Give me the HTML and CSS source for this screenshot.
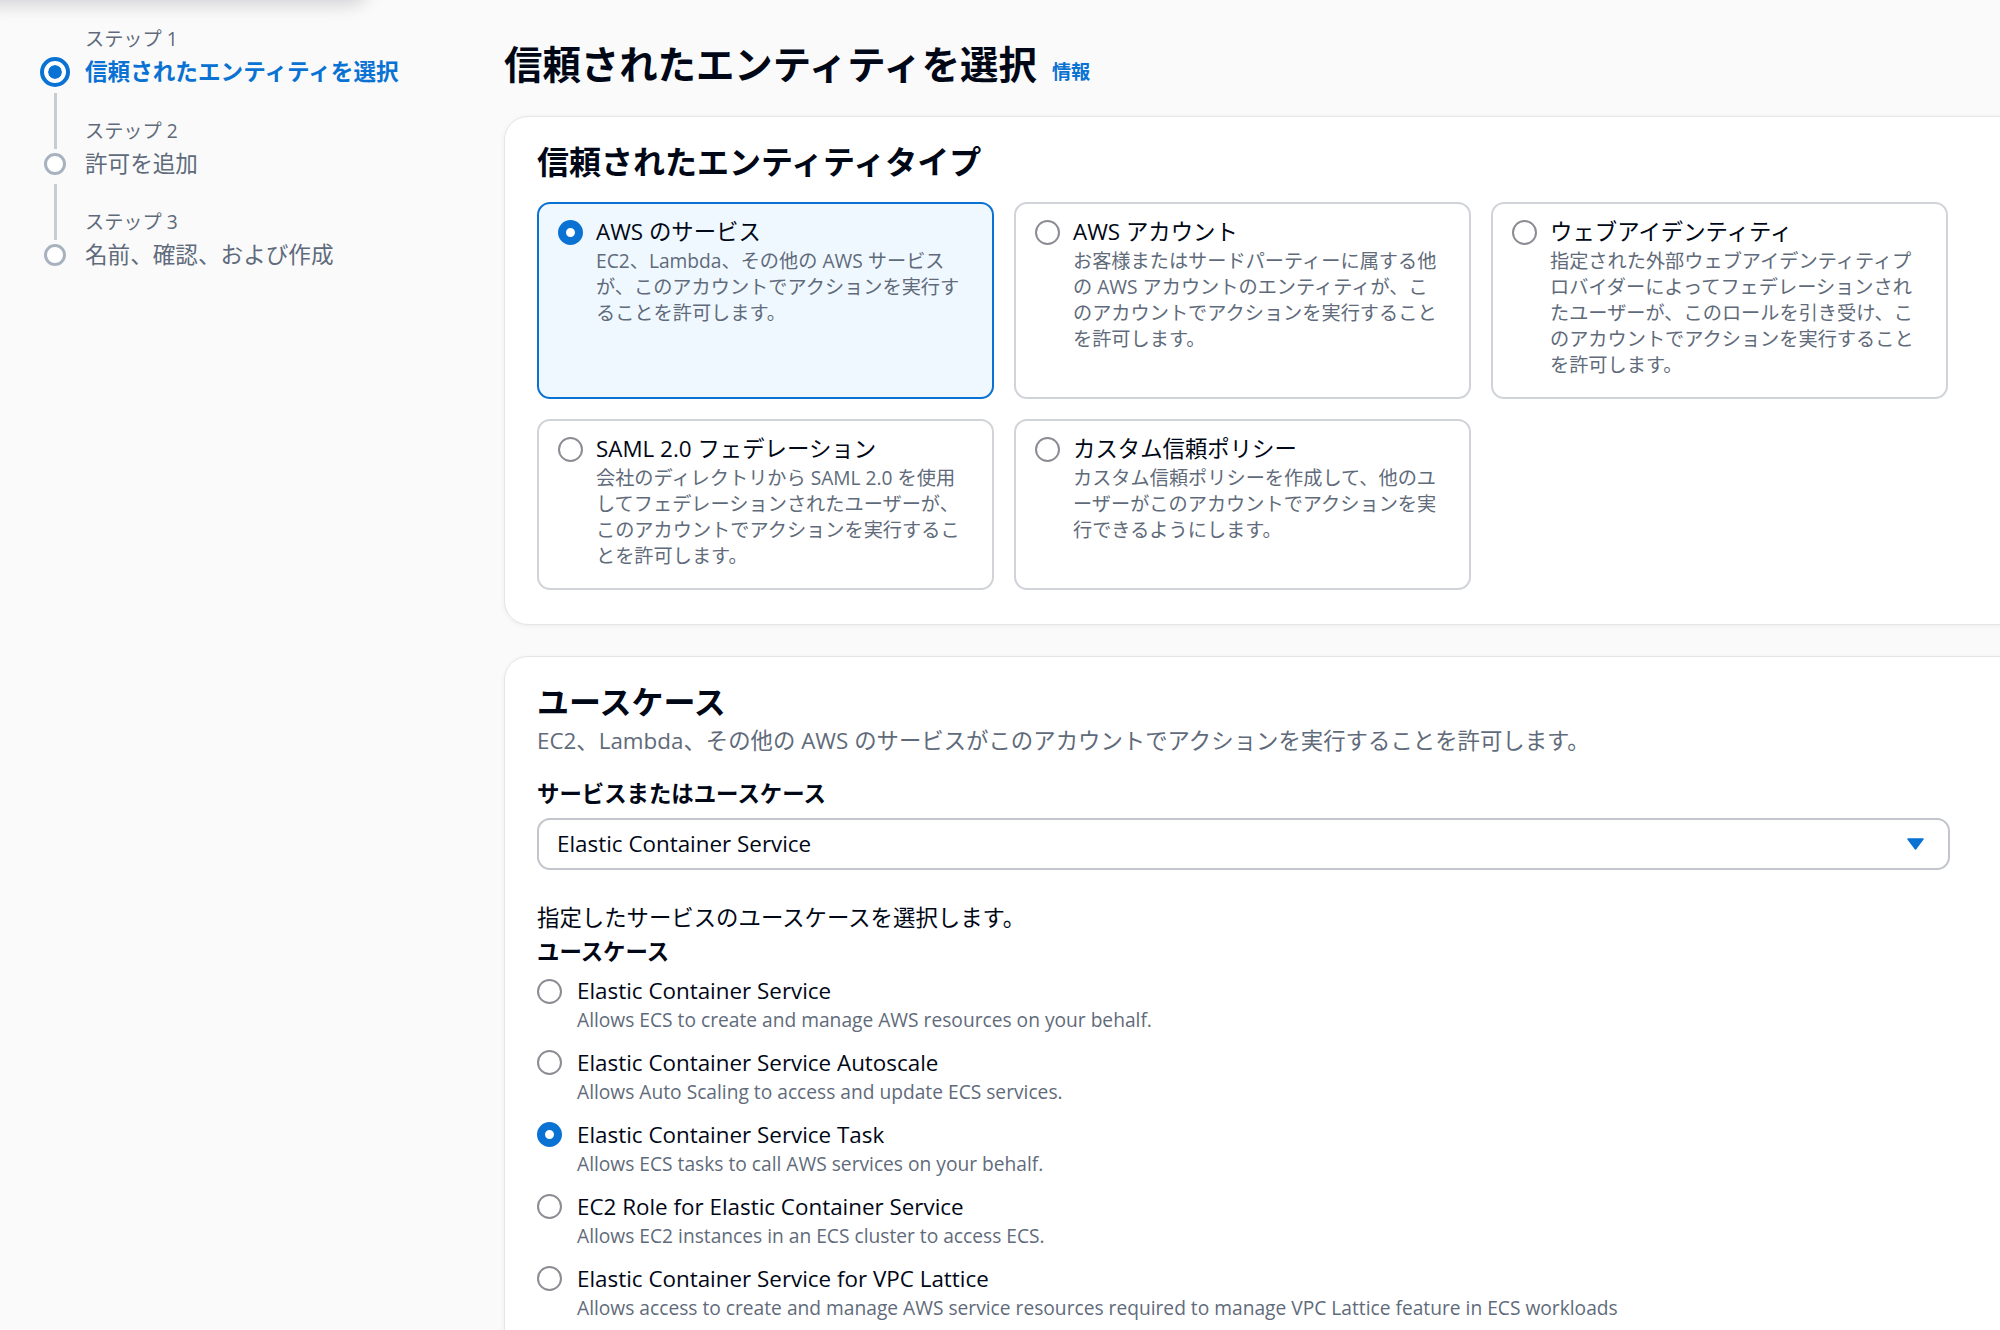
FILE: index.html
```html
<!DOCTYPE html>
<html lang="ja">
<head>
    <meta charset="UTF-8">
    <meta name="viewport" content="width=device-width, initial-scale=1.0">
    <title>ロールを作成 - 信頼されたエンティティを選択</title>
    <link rel="stylesheet" href="styles.css">
</head>
<body>
    <div class="top-shadow"></div>

    <div class="layout">
        <nav class="steps">
            <div class="step active">
                <span class="step-label">ステップ 1</span>
                <span class="step-marker"></span>
                <span class="step-title">信頼されたエンティティを選択</span>
            </div>
            <div class="step">
                <span class="step-label">ステップ 2</span>
                <span class="step-marker"></span>
                <span class="step-title">許可を追加</span>
            </div>
            <div class="step">
                <span class="step-label">ステップ 3</span>
                <span class="step-marker"></span>
                <span class="step-title">名前、確認、および作成</span>
            </div>
        </nav>

        <main class="content">
            <div class="page-header">
                <h1>信頼されたエンティティを選択</h1>
                <a class="info-link" href="#">情報</a>
            </div>

            <section class="panel">
                <h2>信頼されたエンティティタイプ</h2>
                <div class="tiles">
                    <label class="tile selected">
                        <span class="radio checked"></span>
                        <span class="tile-text">
                            <span class="tile-title">AWS のサービス</span>
                            <span class="tile-desc">EC2、Lambda、その他の AWS サービスが、このアカウントでアクションを実行することを許可します。</span>
                        </span>
                    </label>
                    <label class="tile">
                        <span class="radio"></span>
                        <span class="tile-text">
                            <span class="tile-title">AWS アカウント</span>
                            <span class="tile-desc">お客様またはサードパーティーに属する他の AWS アカウントのエンティティが、このアカウントでアクションを実行することを許可します。</span>
                        </span>
                    </label>
                    <label class="tile">
                        <span class="radio"></span>
                        <span class="tile-text">
                            <span class="tile-title">ウェブアイデンティティ</span>
                            <span class="tile-desc">指定された外部ウェブアイデンティティプロバイダーによってフェデレーションされたユーザーが、このロールを引き受け、このアカウントでアクションを実行することを許可します。</span>
                        </span>
                    </label>
                    <label class="tile">
                        <span class="radio"></span>
                        <span class="tile-text">
                            <span class="tile-title">SAML 2.0 フェデレーション</span>
                            <span class="tile-desc">会社のディレクトリから SAML 2.0 を使用してフェデレーションされたユーザーが、このアカウントでアクションを実行することを許可します。</span>
                        </span>
                    </label>
                    <label class="tile">
                        <span class="radio"></span>
                        <span class="tile-text">
                            <span class="tile-title">カスタム信頼ポリシー</span>
                            <span class="tile-desc">カスタム信頼ポリシーを作成して、他のユーザーがこのアカウントでアクションを実行できるようにします。</span>
                        </span>
                    </label>
                </div>
            </section>

            <section class="panel">
                <h2>ユースケース</h2>
                <p class="panel-desc">EC2、Lambda、その他の AWS のサービスがこのアカウントでアクションを実行することを許可します。</p>

                <div class="field-label">サービスまたはユースケース</div>
                <div class="select">
                    <span>Elastic Container Service</span>
                    <svg class="caret" width="17" height="12" viewBox="0 0 17 12">
                        <polygon points="1,1 16,1 8.5,11" fill="#0972d3" stroke="#0972d3" stroke-width="1.5" stroke-linejoin="round"/>
                    </svg>
                </div>

                <p class="hint">指定したサービスのユースケースを選択します。</p>
                <div class="field-label tight">ユースケース</div>

                <div class="options">
                    <div class="option">
                        <span class="radio"></span>
                        <span class="option-label">Elastic Container Service</span>
                        <span class="option-desc">Allows ECS to create and manage AWS resources on your behalf.</span>
                    </div>
                    <div class="option">
                        <span class="radio"></span>
                        <span class="option-label">Elastic Container Service Autoscale</span>
                        <span class="option-desc">Allows Auto Scaling to access and update ECS services.</span>
                    </div>
                    <div class="option">
                        <span class="radio checked"></span>
                        <span class="option-label">Elastic Container Service Task</span>
                        <span class="option-desc">Allows ECS tasks to call AWS services on your behalf.</span>
                    </div>
                    <div class="option">
                        <span class="radio"></span>
                        <span class="option-label">EC2 Role for Elastic Container Service</span>
                        <span class="option-desc">Allows EC2 instances in an ECS cluster to access ECS.</span>
                    </div>
                    <div class="option">
                        <span class="radio"></span>
                        <span class="option-label">Elastic Container Service for VPC Lattice</span>
                        <span class="option-desc">Allows access to create and manage AWS service resources required to manage VPC Lattice feature in ECS workloads</span>
                    </div>
                </div>
            </section>
        </main>
    </div>
</body>
</html>
```

FILE: styles.css
```css
html, body {
    margin: 0;
    padding: 0;
    overflow: hidden;
}
body {
    font-family: "Open Sans", "Noto Sans CJK JP", sans-serif;
    font-size: 22.4px;
    line-height: 32px;
    color: #000716;
    background-color: #fafafa;
    height: 1330px;
}

/* faint shadow of a menu hanging above the viewport */
.top-shadow {
    position: absolute;
    top: -44px;
    left: -30px;
    width: 400px;
    height: 44px;
    border-radius: 22px;
    background: #fafafa;
    box-shadow: 0 5px 18px rgba(0, 7, 22, 0.16);
}

.layout {
    display: flex;
}

/* wizard steps */
.steps {
    width: 504px;
    flex-shrink: 0;
    box-sizing: border-box;
    padding: 26px 0 0 40px;
    display: flex;
    flex-direction: column;
    gap: 29.5px;
}
.step {
    display: grid;
    grid-template-columns: 30px auto;
    column-gap: 15px;
    row-gap: 4px;
}
.step-label {
    grid-column: 2;
    grid-row: 1;
    font-size: 19.2px;
    line-height: 26px;
    color: #5f6b7a;
}
.step-marker {
    grid-column: 1;
    grid-row: 2;
    align-self: center;
    justify-self: center;
    position: relative;
    width: 22px;
    height: 22px;
    box-sizing: border-box;
    border: 3px solid #a8b2bf;
    border-radius: 50%;
    background: #fff;
}
.step + .step .step-marker::before {
    content: "";
    position: absolute;
    left: 50%;
    margin-left: -1.5px;
    bottom: calc(100% + 7px);
    width: 3px;
    height: 56px;
    background: #c6ccd4;
}
.step-title {
    grid-column: 2;
    grid-row: 2;
    font-size: 22.6px;
    line-height: 32px;
    color: #5f6b7a;
}
.step.active .step-marker {
    width: 30px;
    height: 30px;
    border: 4px solid #0972d3;
    padding: 4px;
    background: #0972d3;
    background-clip: content-box;
    box-shadow: inset 0 0 0 4px #fff;
}
.step.active .step-title {
    color: #0972d3;
    font-weight: 700;
}

/* main column */
.content {
    padding-top: 40px;
}
.page-header {
    display: flex;
    align-items: baseline;
    gap: 15px;
}
h1 {
    margin: 0;
    font-size: 38.4px;
    line-height: 48px;
    font-weight: 700;
}
.info-link {
    font-size: 19.2px;
    font-weight: 700;
    color: #0972d3;
    text-decoration: none;
}

.panel {
    width: 1560px;
    margin-top: 28px;
    box-sizing: border-box;
    padding: 26px 0 34px 32px;
    background: #fff;
    border: 1px solid #e4e6e9;
    border-radius: 24px;
    box-shadow: 0 1px 5px rgba(0, 7, 22, 0.06);
}
.panel + .panel {
    margin-top: 31px;
    padding-bottom: 60px;
}
h2 {
    margin: 0 0 21px;
    font-size: 32px;
    line-height: 38px;
    font-weight: 700;
}
.panel + .panel h2 {
    margin-bottom: 4px;
}

/* entity type tiles */
.tiles {
    display: grid;
    grid-template-columns: repeat(3, 457px);
    gap: 20px;
}
.tile {
    display: flex;
    gap: 13px;
    padding: 12px 29px 19px 19px;
    border: 2px solid #d0d3d8;
    border-radius: 13px;
    background: #fff;
}
.tile.selected {
    border-color: #0972d3;
    background: #f0f8ff;
}
.radio {
    flex-shrink: 0;
    width: 25px;
    height: 25px;
    box-sizing: border-box;
    border: 2px solid #8c8c94;
    border-radius: 50%;
    background: #fff;
}
.radio.checked {
    border: 8px solid #0972d3;
}
.tile .radio {
    margin-top: 4px;
}
.tile-text {
    display: flex;
    flex-direction: column;
    min-width: 0;
}
.tile-title {
    line-height: 32px;
}
.tile-desc {
    font-size: 19.2px;
    line-height: 26px;
    color: #5f6b7a;
    line-break: loose;
}

/* use case form */
.panel-desc {
    margin: 0;
    color: #5f6b7a;
}
.field-label {
    margin-top: 21px;
    font-weight: 700;
}
.field-label.tight {
    margin-top: 2px;
}
.select {
    width: 1413px;
    height: 52px;
    margin-top: 8px;
    box-sizing: border-box;
    padding: 0 24px 0 18px;
    display: flex;
    align-items: center;
    justify-content: space-between;
    border: 2px solid #c2c6cc;
    border-radius: 13px;
    background: #fff;
}
.hint {
    margin: 32px 0 0;
}
.options {
    margin-top: 7px;
    display: flex;
    flex-direction: column;
    gap: 14.4px;
}
.option {
    display: grid;
    grid-template-columns: 26px auto;
    column-gap: 14px;
}
.option .radio {
    grid-column: 1;
    grid-row: 1;
    align-self: center;
}
.option-label {
    grid-column: 2;
    grid-row: 1;
}
.option-desc {
    grid-column: 2;
    grid-row: 2;
    font-size: 19.2px;
    line-height: 25.6px;
    color: #5f6b7a;
}
```
